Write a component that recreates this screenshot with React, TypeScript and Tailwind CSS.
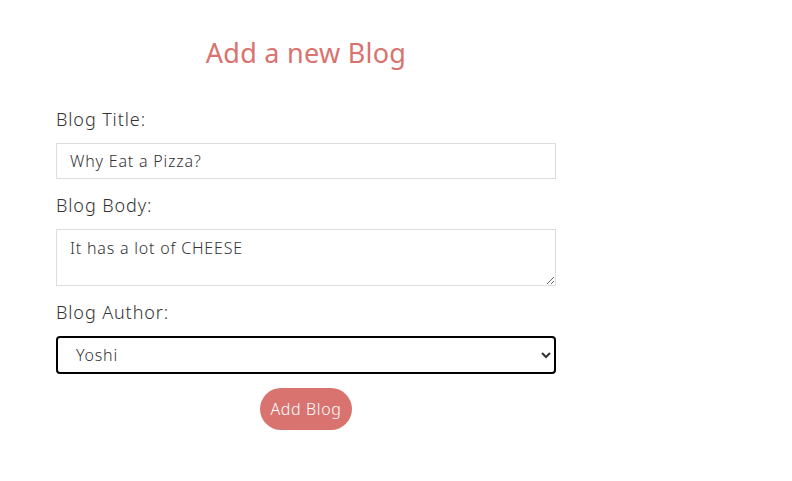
import { useState } from 'react';

const font = { fontFamily: '"Noto Sans", "Open Sans", sans-serif' };

const Create: React.FC = () => {
  const [title, setTitle] = useState('Why Eat a Pizza?');
  const [body, setBody] = useState('It has a lot of CHEESE');
  const [author, setAuthor] = useState('yoshi');

  return (
    <div className="w-[500px] ml-[56px] text-[#333]" style={font}>
      <h2 className="pt-[36px] h-[72px] text-center text-[27px] leading-[34px] font-normal tracking-[0.01em] text-[#d9736f]">
        Add a new Blog
      </h2>
      <form onSubmit={(e) => e.preventDefault()}>
        <label className="block mt-[35px] h-[24px] text-[18px] leading-[24px] font-light tracking-[0.05em]">
          Blog Title:
        </label>
        <input
          type="text"
          value={title}
          onChange={(e) => setTitle(e.target.value)}
          className="block w-full mt-[12px] h-[36px] px-[13px] border border-[#ddd] text-[16px] font-light tracking-[0.05em] text-[#333] outline-none"
        />
        <label className="block mt-[14px] h-[24px] text-[18px] leading-[24px] font-light tracking-[0.05em]">
          Blog Body:
        </label>
        <textarea
          value={body}
          onChange={(e) => setBody(e.target.value)}
          className="block w-full mt-[12px] h-[57px] px-[13px] py-[6px] border border-[#ddd] text-[16px] font-light tracking-[0.05em] leading-[24px] text-[#333] outline-none resize-y"
        />
        <label className="block mt-[14px] h-[24px] text-[18px] leading-[24px] font-light tracking-[0.05em]">
          Blog Author:
        </label>
        <select
          value={author}
          onChange={(e) => setAuthor(e.target.value)}
          className="block w-full mt-[12px] h-[38px] px-[14px] border-2 border-black rounded-[4px] text-[16px] font-light tracking-[0.05em] text-[#333] bg-white outline-none"
        >
          <option value="mario">Mario</option>
          <option value="yoshi">Yoshi</option>
        </select>
        <div className="flex justify-center mt-[14px]">
          <button className="w-[92px] h-[42px] rounded-full bg-[#d9736f] text-white text-[16px] font-light tracking-[0.04em]">
            Add Blog
          </button>
        </div>
      </form>
    </div>
  );
};

export default function App() {
  return (
    <div className="w-[792px] h-[481px] bg-white">
      <Create />
    </div>
  );
}
